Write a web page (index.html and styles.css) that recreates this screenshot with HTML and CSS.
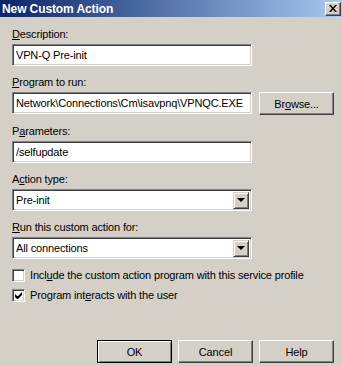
FILE: index.html
```html
<!DOCTYPE html>
<html lang="en">
<head>
    <meta charset="UTF-8">
    <title>New Custom Action</title>
    <link rel="stylesheet" href="styles.css">
</head>
<body>
    <div class="dialog">
        <div class="titlebar">
            <span class="title">New Custom Action</span>
            <span class="close-btn">
                <svg width="8" height="7" viewBox="0 0 8 7">
                    <path d="M0 0h2l2 2.5 2-2.5h2l-3 3.5 3 3.5h-2l-2-2.5-2 2.5h-2l3-3.5z" fill="#000"/>
                </svg>
            </span>
        </div>

        <div class="content">
            <div class="field">
                <label class="label"><u>D</u>escription:</label>
                <div class="row">
                    <div class="edit">VPN-Q Pre-init</div>
                </div>
            </div>

            <div class="field">
                <label class="label"><u>P</u>rogram to run:</label>
                <div class="row">
                    <div class="edit">Network\Connections\Cm\isavpnq\VPNQC.EXE</div>
                    <button class="btn">Br<u>o</u>wse...</button>
                </div>
            </div>

            <div class="field">
                <label class="label">P<u>a</u>rameters:</label>
                <div class="row">
                    <div class="edit">/selfupdate</div>
                </div>
            </div>

            <div class="field">
                <label class="label">A<u>c</u>tion type:</label>
                <div class="row">
                    <div class="combo">
                        <span class="combo-text">Pre-init</span>
                        <span class="combo-arrow"><i class="tri"></i></span>
                    </div>
                </div>
            </div>

            <div class="field">
                <label class="label"><u>R</u>un this custom action for:</label>
                <div class="row">
                    <div class="combo">
                        <span class="combo-text">All connections</span>
                        <span class="combo-arrow"><i class="tri"></i></span>
                    </div>
                </div>
            </div>

            <div class="checks">
                <div class="check-row">
                    <span class="check"></span>
                    <span>Incl<u>u</u>de the custom action program with this service profile</span>
                </div>
                <div class="check-row">
                    <span class="check">
                        <svg width="7" height="7" viewBox="0 0 7 7">
                            <path d="M0 2v3l2 2h1l4-4v-3l-4 4h-1z" fill="#000"/>
                        </svg>
                    </span>
                    <span>Program int<u>e</u>racts with the user</span>
                </div>
            </div>

            <div class="buttons">
                <button class="btn default">OK</button>
                <button class="btn">Cancel</button>
                <button class="btn">Help</button>
            </div>
        </div>
    </div>
</body>
</html>
```

FILE: styles.css
```css
body {
    margin: 0;
    background: #d4d0c8;
    font-family: "Liberation Sans", Arial, sans-serif;
    font-size: 11px;
    letter-spacing: -0.15px;
    color: #000;
}

.dialog {
    width: 342px;
    height: 366px;
    overflow: hidden;
}

.titlebar {
    height: 17px;
    display: flex;
    align-items: center;
    justify-content: space-between;
    padding: 0 1px 0 2px;
    background: linear-gradient(to right, #0a246a, #a6caf0);
}

.title {
    color: #fff;
    font-weight: bold;
    font-size: 12px;
    letter-spacing: -0.1px;
}

.close-btn {
    width: 16px;
    height: 14px;
    box-sizing: border-box;
    display: flex;
    align-items: center;
    justify-content: center;
    background: #d4d0c8;
    border: 1px solid;
    border-color: #fff #404040 #404040 #fff;
    box-shadow: inset -1px -1px #808080;
}

.content {
    padding: 11px 8px 0 12px;
}

.field {
    margin-bottom: 10px;
}

.label {
    display: block;
    line-height: 13px;
    margin-bottom: 3px;
}

.row {
    display: flex;
    gap: 7px;
}

.edit, .combo {
    width: 240px;
    height: 22px;
    box-sizing: border-box;
    background: #fff;
    border: 1px solid;
    border-color: #808080 #fff #fff #808080;
    box-shadow: inset 1px 1px #404040, inset -1px -1px #d4d0c8;
    padding: 0 3px;
    line-height: 20px;
    white-space: nowrap;
    overflow: hidden;
}

.combo {
    display: flex;
    justify-content: space-between;
    align-items: center;
    padding: 2px 2px 2px 3px;
    line-height: 16px;
}

.combo-arrow {
    width: 16px;
    height: 17px;
    box-sizing: border-box;
    background: #d4d0c8;
    border: 1px solid;
    border-color: #d4d0c8 #404040 #404040 #d4d0c8;
    box-shadow: inset 1px 1px #fff, inset -1px -1px #808080;
    display: flex;
    align-items: center;
    justify-content: center;
}

.tri {
    width: 0;
    height: 0;
    border-left: 4px solid transparent;
    border-right: 4px solid transparent;
    border-top: 4px solid #000;
}

.btn {
    width: 75px;
    height: 23px;
    padding: 0;
    font: inherit;
    letter-spacing: inherit;
    color: #000;
    background: #d4d0c8;
    border: 1px solid;
    border-color: #fff #404040 #404040 #fff;
    box-shadow: inset -1px -1px #808080;
}

.btn.default {
    border-color: #000;
    box-shadow: inset 1px 1px #fff, inset -1px -1px #808080;
}

.checks {
    margin-top: 10px;
    display: flex;
    flex-direction: column;
    gap: 7px;
}

.check-row {
    display: flex;
    align-items: center;
    gap: 5px;
    line-height: 13px;
}

.check {
    width: 13px;
    height: 13px;
    box-sizing: border-box;
    background: #fff;
    border: 1px solid;
    border-color: #808080 #fff #fff #808080;
    box-shadow: inset 1px 1px #404040, inset -1px -1px #d4d0c8;
    display: flex;
    align-items: center;
    justify-content: center;
}

.buttons {
    margin-top: 38px;
    display: flex;
    justify-content: flex-end;
    gap: 6px;
}
```
